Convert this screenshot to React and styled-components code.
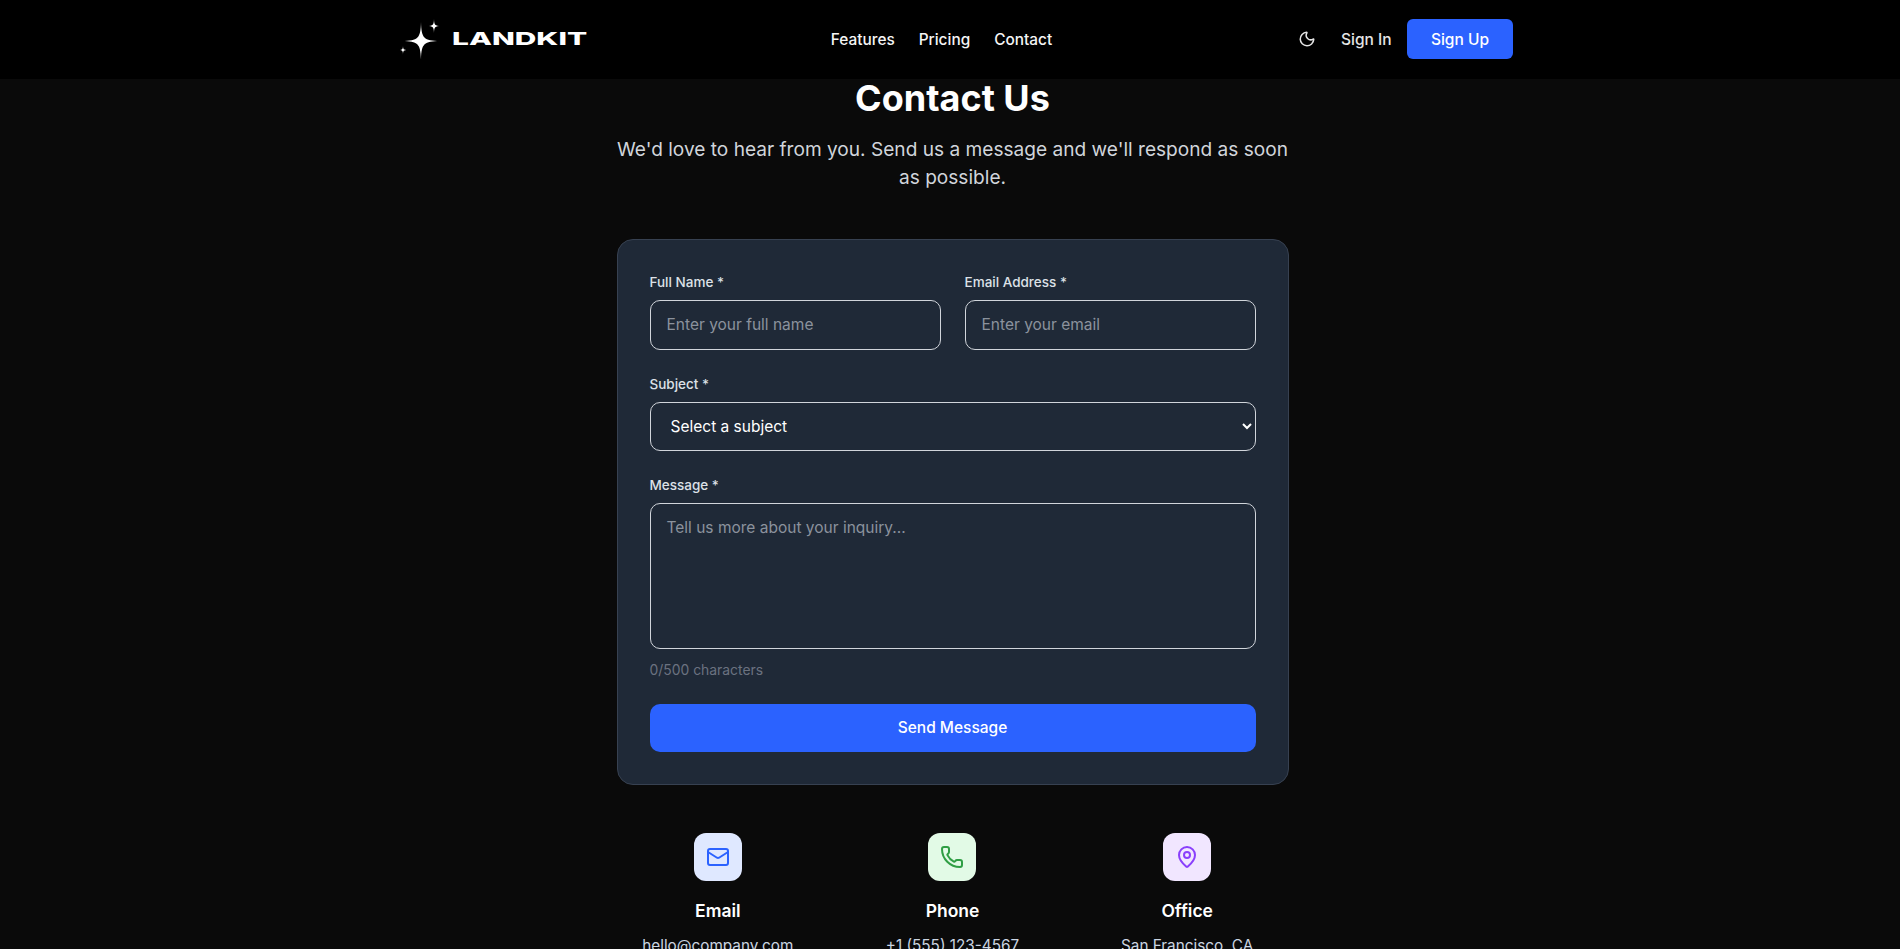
import React from "react";
import styled, { createGlobalStyle } from "styled-components";
import { Moon, Mail, Phone, MapPin } from "lucide-react";

const GlobalStyle = createGlobalStyle`
  html, body {
    margin: 0;
    padding: 0;
    height: 949px;
    overflow: hidden;
    background: #0a0a0a;
  }
  * { box-sizing: border-box; }
  body {
    font-family: Inter, "Noto Sans", "Liberation Sans", sans-serif;
    color: #fff;
  }
`;

const Header = styled.header`
  height: 79px;
  background: #000;
  padding: 0 0 1px 12px;
  display: flex;
  justify-content: center;
  align-items: center;
`;

const HeaderInner = styled.div`
  width: 1114px;
  display: flex;
  justify-content: space-between;
  align-items: center;
`;

const Logo = styled.a`
  display: flex;
  align-items: center;
  width: 189px;
  height: 40px;
  gap: 7px;
`;

const LogoText = styled.span`
  display: inline-block;
  font-size: 18px;
  font-weight: 800;
  line-height: 18px;
  transform: scaleX(1.66);
  transform-origin: left center;
`;

const Nav = styled.nav`
  display: flex;
  gap: 24px;
`;

const NavLink = styled.a`
  font-size: 15.4px;
  font-weight: 500;
  color: #f5f5f5;
`;

const Actions = styled.div`
  display: flex;
  align-items: center;
  width: 218px;
`;

const ThemeToggle = styled.span`
  display: flex;
  width: 24px;
  justify-content: center;
  margin-right: 22px;
  color: #e5e5e5;
`;

const SignIn = styled.a`
  font-size: 15.5px;
  font-weight: 500;
  color: #e5e5e5;
  margin-right: 16px;
  white-space: nowrap;
  flex: none;
  width: 50px;
`;

const SignUp = styled.button`
  width: 106px;
  height: 40px;
  border: 0;
  border-radius: 6px;
  background: #2b62ff;
  color: #fff;
  font: 500 15.5px Inter, sans-serif;
  flex: none;
`;

const Main = styled.main`
  padding-left: 5px;
  display: flex;
  flex-direction: column;
  align-items: center;
`;

const Column = styled.div`
  width: 672px;
`;

const Title = styled.h1`
  margin: 0;
  font-size: 36px;
  font-weight: 700;
  line-height: 38px;
  text-align: center;
  color: #fff;
`;

const Intro = styled.p`
  margin: 18px 0 48px;
  font-size: 19.1px;
  line-height: 28px;
  text-align: center;
  color: #d1d5db;
`;

const Card = styled.form`
  background: #1f2937;
  border: 1px solid #374151;
  border-radius: 16px;
  padding: 32px;
  display: flex;
  flex-direction: column;
  gap: 24px;
`;

const Row = styled.div`
  display: grid;
  grid-template-columns: 1fr 1fr;
  gap: 24px;
`;

const Field = styled.div`
  display: flex;
  flex-direction: column;
`;

const Label = styled.label`
  font-size: 13.5px;
  font-weight: 500;
  line-height: 20px;
  margin-bottom: 8px;
  color: #dde1e7;
`;

const Input = styled.input`
  height: 50px;
  padding: 0 16px 2px;
  background: transparent;
  border: 1px solid #d1d5db;
  border-radius: 10px;
  color: #fff;
  font: 400 15.5px Inter, sans-serif;
  &::placeholder { color: #8b929d; opacity: 1; }
`;

const Select = styled.select`
  height: 49px;
  padding: 0 16px;
  background: transparent;
  border: 1px solid #d1d5db;
  border-radius: 10px;
  color: #fff;
  font: 400 15.5px Inter, sans-serif;
`;

const TextArea = styled.textarea`
  display: block;
  height: 146px;
  padding: 13px 16px;
  background: transparent;
  border: 1px solid #d1d5db;
  border-radius: 10px;
  color: #fff;
  resize: none;
  font: 400 15.5px/22px Inter, sans-serif;
  &::placeholder { color: #8b929d; opacity: 1; }
`;

const Counter = styled.span`
  margin-top: 11px;
  font-size: 13.9px;
  line-height: 20px;
  color: #6b7280;
`;

const SendButton = styled.button`
  height: 48px;
  padding: 0 0 2px;
  border: 0;
  border-radius: 10px;
  background: #2b62ff;
  color: #fff;
  font: 500 15.5px Inter, sans-serif;
`;

const InfoGrid = styled.div`
  margin-top: 48px;
  display: grid;
  grid-template-columns: repeat(3, 1fr);
  gap: 32px;
`;

const InfoItem = styled.div`
  display: flex;
  flex-direction: column;
  align-items: center;
`;

const IconBox = styled.div`
  width: 48px;
  height: 48px;
  border-radius: 12px;
  display: flex;
  align-items: center;
  justify-content: center;
  margin-bottom: 16px;
  background: ${(p) => p.$bg};
  color: ${(p) => p.$fg};
`;

const InfoTitle = styled.div`
  font-size: 17.5px;
  font-weight: 600;
  line-height: 28px;
  margin-bottom: 9px;
`;

const InfoValue = styled.div`
  font-size: 15.3px;
  line-height: 24px;
  color: #cbd5e1;
`;

/* four point sparkle with long thin rays */
const Star = ({ cx, cy, r }) => {
  const a = r * 0.14;
  const b = r * 0.02;
  const q = [
    [1, -1],
    [1, 1],
    [-1, 1],
    [-1, -1],
  ];
  const d = q
    .map(([sx, sy], i) =>
      i % 2 === 0
        ? `C${cx + sx * b} ${cy + sy * a} ${cx + sx * a} ${cy + sy * b} ${cx + sx * r} ${cy}`
        : `C${cx + sx * a} ${cy + sy * b} ${cx + sx * b} ${cy + sy * a} ${cx} ${cy + sy * r}`
    )
    .join("");
  return <path d={`M${cx} ${cy - r}${d}Z`} fill="#fff" />;
};

const LogoMark = () => (
  <svg width="46" height="40" viewBox="0 0 46 40">
    <Star cx={22} cy={22} r={19} />
    <Star cx={35} cy={7} r={7} />
    <Star cx={4} cy={31} r={4.5} />
  </svg>
);

const infos = [
  { title: "Email", value: "hello@company.com", icon: Mail, bg: "#dfe8ff", fg: "#2b62ff" },
  { title: "Phone", value: "+1 (555) 123-4567", icon: Phone, bg: "#e2fae6", fg: "#2f9e44" },
  { title: "Office", value: "San Francisco, CA", icon: MapPin, bg: "#f1e6ff", fg: "#8a3ffc" },
];

export default function App() {
  return (
    <>
      <GlobalStyle />
      <Header>
        <HeaderInner>
          <Logo>
            <LogoMark />
            <LogoText>LANDKIT</LogoText>
          </Logo>
          <Nav>
            <NavLink>Features</NavLink>
            <NavLink>Pricing</NavLink>
            <NavLink>Contact</NavLink>
          </Nav>
          <Actions>
            <ThemeToggle>
              <Moon size={18} strokeWidth={2} />
            </ThemeToggle>
            <SignIn>Sign In</SignIn>
            <SignUp>Sign Up</SignUp>
          </Actions>
        </HeaderInner>
      </Header>
      <Main>
        <Column>
          <Title>Contact Us</Title>
          <Intro>We'd love to hear from you. Send us a message and we'll respond as soon as possible.</Intro>
          <Card>
            <Row>
              <Field>
                <Label>Full Name *</Label>
                <Input placeholder="Enter your full name" />
              </Field>
              <Field>
                <Label>Email Address *</Label>
                <Input placeholder="Enter your email" />
              </Field>
            </Row>
            <Field>
              <Label>Subject *</Label>
              <Select>
                <option>Select a subject</option>
              </Select>
            </Field>
            <Field>
              <Label>Message *</Label>
              <TextArea placeholder="Tell us more about your inquiry..." />
              <Counter>0/500 characters</Counter>
            </Field>
            <SendButton type="button">Send Message</SendButton>
          </Card>
          <InfoGrid>
            {infos.map((info) => (
              <InfoItem key={info.title}>
                <IconBox $bg={info.bg} $fg={info.fg}>
                  <info.icon size={24} strokeWidth={2} />
                </IconBox>
                <InfoTitle>{info.title}</InfoTitle>
                <InfoValue>{info.value}</InfoValue>
              </InfoItem>
            ))}
          </InfoGrid>
        </Column>
      </Main>
    </>
  );
}
